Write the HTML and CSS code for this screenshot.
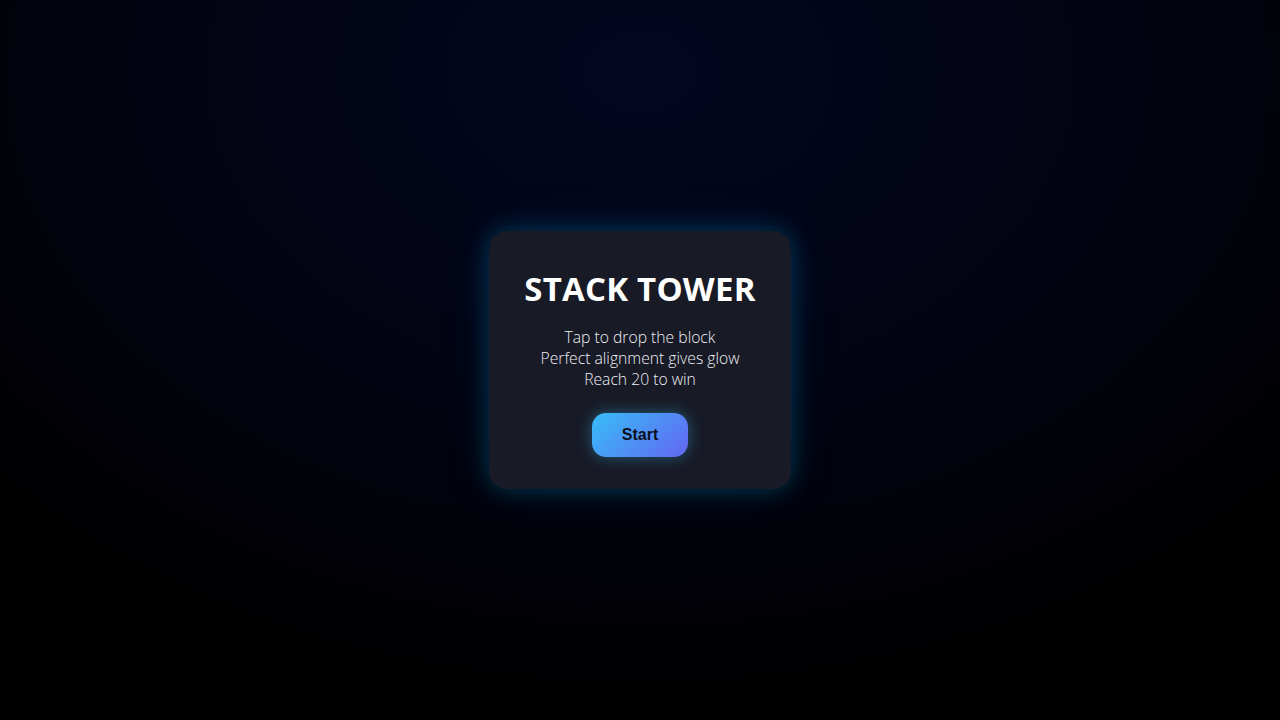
FILE: index.html
```html
<!DOCTYPE html>
<html>
<head>
<meta charset="utf-8">
<link rel="stylesheet" href="styles.css">
</head>
<body>
<main class="stage">
  <section class="card">
    <h1 class="title">STACK TOWER</h1>
    <p class="info">Tap to drop the block<br>Perfect alignment gives glow<br>Reach 20 to win</p>
    <button class="start">Start</button>
  </section>
</main>
</body>
</html>
```
FILE: styles.css
```css
html, body {
  margin: 0;
  height: 100%;
}
body {
  background: radial-gradient(ellipse 70% 90% at 50% 10%, #030720 0%, #020414 45%, #000000 100%);
  font-family: "Open Sans", sans-serif;
  overflow: hidden;
}
.stage {
  height: 720px;
  display: flex;
  align-items: center;
  justify-content: center;
}
.card {
  width: 302px;
  box-sizing: border-box;
  padding: 38px 20px 32px;
  background: #181a25;
  border-radius: 18px;
  box-shadow: 0 0 24px rgba(0, 160, 220, 0.3), 0 0 50px rgba(0, 130, 190, 0.12);
  display: flex;
  flex-direction: column;
  align-items: center;
  text-align: center;
}
.title {
  margin: 0;
  color: #ffffff;
  font-family: "Open Sans", sans-serif;
  font-weight: 700;
  font-size: 33px;
  line-height: 40px;
  letter-spacing: 0.2px;
}
.info {
  margin: 18px 0 0;
  color: #eef0f5;
  font-family: "Open Sans", sans-serif;
  font-weight: 300;
  font-size: 15.7px;
  line-height: 21px;
}
.start {
  margin-top: 23px;
  width: 96px;
  height: 44px;
  border: none;
  border-radius: 14px;
  background: linear-gradient(135deg, #38bdf8 0%, #6366f1 100%);
  color: #0b1020;
  font-family: "Liberation Sans", Arial, sans-serif;
  font-weight: 700;
  font-size: 16px;
  box-shadow: 0 0 16px rgba(56, 189, 248, 0.4);
  cursor: pointer;
}
```
